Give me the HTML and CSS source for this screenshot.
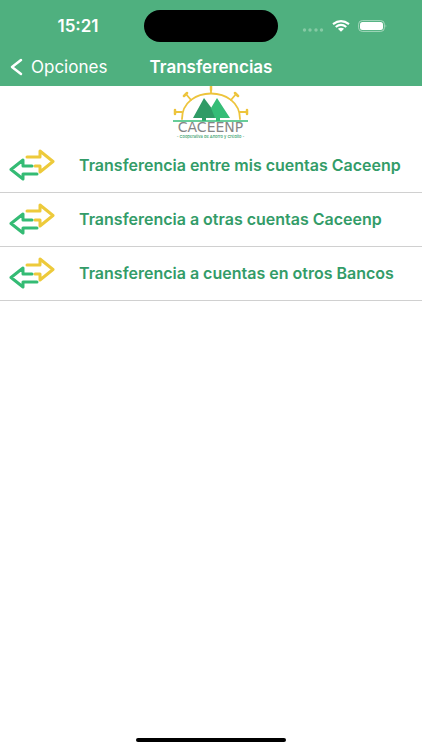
FILE: index.html
```html
<!DOCTYPE html>
<html lang="es">
<head>
<meta charset="utf-8">
<meta name="viewport" content="width=device-width, initial-scale=1">
<title>Transferencias</title>
<link rel="stylesheet" href="styles.css">
</head>
<body>
<svg class="defs" aria-hidden="true">
  <symbol id="swap" viewBox="0 0 46 32">
    <g fill="none" stroke-width="3" stroke-linecap="round" stroke-linejoin="round">
      <path stroke="#edca3b" d="M18 8H31V2L44 12.500L31 23V17H26"/>
      <path stroke="#34bb74" d="M23 17H14V11L2 20.500L14 30V25H28"/>
    </g>
  </symbol>
</svg>
<div class="screen">
  <header class="top">
    <div class="status">
      <time class="clock">15:21</time>
      <div class="island"></div>
      <div class="indicators">
        <svg class="dots" viewBox="0 0 22 4" aria-hidden="true"><g fill="#86caa5"><circle cx="2.500" cy="2" r="1.700"/><circle cx="8" cy="2" r="1.700"/><circle cx="14" cy="2" r="1.700"/><circle cx="19.500" cy="2" r="1.700"/></g></svg>
        <svg class="wifi" viewBox="0 0 18 12" aria-hidden="true"><g fill="none" stroke="#fff" stroke-width="2.100"><path d="M1 4.200Q9-2 17 4.200"/><path d="M3.700 7Q9 2.800 14.300 7"/></g><path fill="#fff" d="M5.900 8.800Q9 6.500 12.100 8.800L9 11.800Z"/></svg>
        <svg class="battery" viewBox="0 0 30 12" aria-hidden="true"><rect x=".6" y=".6" width="25.800" height="10.800" rx="3.600" fill="none" stroke="#a5d8bd"/><rect x="2" y="2" width="23" height="8" rx="2.500" fill="#fff"/><path d="M27.600 4.200q1.500 1.800 0 3.600z" fill="#a5d8bd"/></svg>
      </div>
    </div>
    <nav class="nav">
      <a class="back" href="#opciones">
        <svg class="chevron" viewBox="0 0 13 18" aria-hidden="true"><path d="M11 2L2 9L11 16" fill="none" stroke="#fff" stroke-width="2.500" stroke-linecap="round" stroke-linejoin="round"/></svg>
        <span>Opciones</span>
      </a>
      <h1 class="title">Transferencias</h1>
    </nav>
  </header>
  <main>
    <svg class="logo" viewBox="0 6 92 53" role="img" aria-label="CACEENP">
      <g fill="none" stroke="#edc43c" stroke-width="1.800" stroke-linecap="round">
        <path d="M17 39C17 5 75 5 75 39"/>
        <path d="M46 13V8M26 20L21 14M66 20L71 14M17 32H10M75 32H82"/>
      </g>
      <path d="M46 6V10M19 16L22 13M73 16L70 13M10 30V34M82 30V34" stroke="#edc43c" stroke-width="2.500" stroke-linecap="round"/>
      <path fill="#309b66" d="M39 18L54 38H41V41H37V38H28Z"/>
      <path fill="#35bd77" d="M52 18L65 38H55V41H51V38H50L46 28Z"/>
      <path stroke="#35bd77" stroke-width="1.500" d="M8 41H83"/>
      <text class="logo-name" x="45.500" y="52" text-anchor="middle">CACEENP</text>
      <text class="logo-tag" x="45.500" y="58" text-anchor="middle">- Cooperativa de Ahorro y Crédito -</text>
    </svg>
    <ul class="list">
      <li><a class="row" href="#propias"><svg class="swap" aria-hidden="true"><use href="#swap"/></svg><span>Transferencia entre mis cuentas Caceenp</span></a></li>
      <li><a class="row" href="#otras"><svg class="swap" aria-hidden="true"><use href="#swap"/></svg><span>Transferencia a otras cuentas Caceenp</span></a></li>
      <li><a class="row" href="#bancos"><svg class="swap" aria-hidden="true"><use href="#swap"/></svg><span>Transferencia a cuentas en otros Bancos</span></a></li>
    </ul>
  </main>
  <footer class="home"><div class="home-bar"></div></footer>
</div>
</body>
</html>
```

FILE: styles.css
```css
* { box-sizing: border-box; }
body {
  margin: 0;
  background: #fff;
  font-family: Inter, "Liberation Sans", sans-serif;
}
a { color: inherit; text-decoration: none; }
.defs { display: none; }
.screen {
  min-height: 100vh;
  display: flex;
  flex-direction: column;
}
.top { background: #4fb07f; color: #fff; }
.status {
  display: grid;
  grid-template-columns: 1fr 134px 1fr;
  align-items: center;
  height: 52px;
}
.clock {
  justify-self: center;
  padding-left: 12px;
  font-size: 17px;
  font-weight: 600;
}
.island { height: 32px; border-radius: 16px; background: #000; }
.indicators {
  display: flex;
  align-items: center;
  gap: 8px;
  padding-left: 24px;
}
.dots { width: 22px; height: 4px; margin-top: 8px; }
.wifi { width: 18px; height: 12px; }
.battery { width: 30px; height: 12px; }
.nav {
  display: grid;
  grid-template-columns: 1fr auto 1fr;
  align-items: center;
  height: 34px;
  padding: 0 10px;
  padding-bottom: 4px;
}
.back {
  display: flex;
  align-items: center;
  gap: 8px;
  font-size: 17px;
}
.chevron { width: 13px; height: 18px; }
.title { margin: 0; font-size: 17px; font-weight: 600; }
main { flex: 1; }
.logo {
  display: block;
  width: 92px;
  height: 53px;
  margin: 0 auto;
}
.logo-name { font-family: "DejaVu Sans", sans-serif; font-size: 14px; fill: #858585; }
.logo-tag { font-size: 4px; font-weight: 500; fill: #309b66; }
.list { margin: 0; padding: 0; list-style: none; }
.row {
  display: flex;
  align-items: center;
  gap: 24px;
  height: 54px;
  padding: 0 9px 2px;
  border-bottom: 1px solid #d0d0d0;
  color: #339c68;
  font-size: 16px;
  font-weight: 600;
  white-space: nowrap;
}
.swap { flex: none; width: 46px; height: 32px; }
.home { padding: 8px 0; }
.home-bar {
  width: 150px;
  height: 4px;
  margin: 0 auto;
  border-radius: 2px;
  background: #000;
}
```
